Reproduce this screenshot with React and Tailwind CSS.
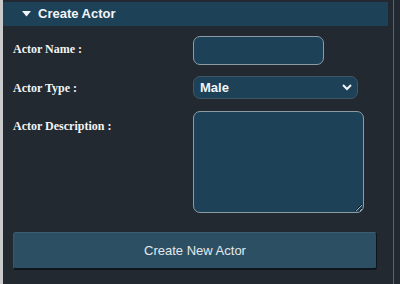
import React from 'react';

const App = () => {
  return (
    <div className="flex h-[284px] w-[400px] bg-[#222931] overflow-hidden">
      <div className="w-[3px] shrink-0 bg-[#c9cacb]" />
      <div className="w-[385px] shrink-0 pt-[2px]">
        <div className="flex h-[24px] items-center bg-[#1d4257] pl-[19px] font-['Liberation_Sans',Arial,sans-serif] text-[13px] font-bold text-[#f2f5f7]">
          <svg width="9" height="6" viewBox="0 0 9 6" className="mr-[7px]">
            <path d="M0 0 H9 L4.5 5.5 Z" fill="#f2f5f7" />
          </svg>
          Create Actor
        </div>

        <form className="pl-[10px] font-['Liberation_Serif','Times_New_Roman',serif] text-[12px] font-bold text-[#f2f5f7]">
          <div className="mt-[10px] flex items-center">
            <label className="w-[180px] pt-[-2px] -mt-[4px]">Actor Name :</label>
            <input
              type="text"
              className="h-[29px] w-[131px] rounded-[7px] border border-[#8d9ba6] bg-[#1d4257] px-2 text-white outline-none"
            />
          </div>

          <div className="mt-[11px] flex items-center">
            <label className="w-[180px]">Actor Type :</label>
            <div className="relative">
              <select className="h-[23px] w-[165px] appearance-none rounded-[7px] border border-[#415564] bg-[#1d4257] pl-[6px] font-['Liberation_Sans',Arial,sans-serif] text-[13px] font-bold text-[#f2f5f7] outline-none">
                <option>Male</option>
                <option>Female</option>
              </select>
              <svg
                width="10"
                height="7"
                viewBox="0 0 10 7"
                className="pointer-events-none absolute right-[6px] top-[8px]"
              >
                <path d="M1 1 L5 5 L9 1" fill="none" stroke="#f2f5f7" strokeWidth="2" />
              </svg>
            </div>
          </div>

          <div className="mt-[12px] flex items-start">
            <label className="w-[180px] pt-[6px]">Actor Description :</label>
            <textarea className="h-[102px] w-[171px] resize rounded-[7px] border border-[#8d9ba6] bg-[#1d4257] p-1 text-white outline-none" />
          </div>

          <button
            type="button"
            className="mt-[19px] h-[38px] w-[364px] rounded-[3px] border border-t-[#3f5d70] border-l-[#3a5668] border-r-[#0e151b] border-b-[#0e151b] border-b-[2px] bg-[#2c4f63] font-['Liberation_Sans',Arial,sans-serif] text-[13px] font-normal text-[#e3e9ed]"
          >
            Create New Actor
          </button>
        </form>
      </div>
      <div className="w-[5px] shrink-0" />
      <div className="w-[1px] shrink-0 bg-[#3e6c9a]" />
    </div>
  );
};

export default App;
